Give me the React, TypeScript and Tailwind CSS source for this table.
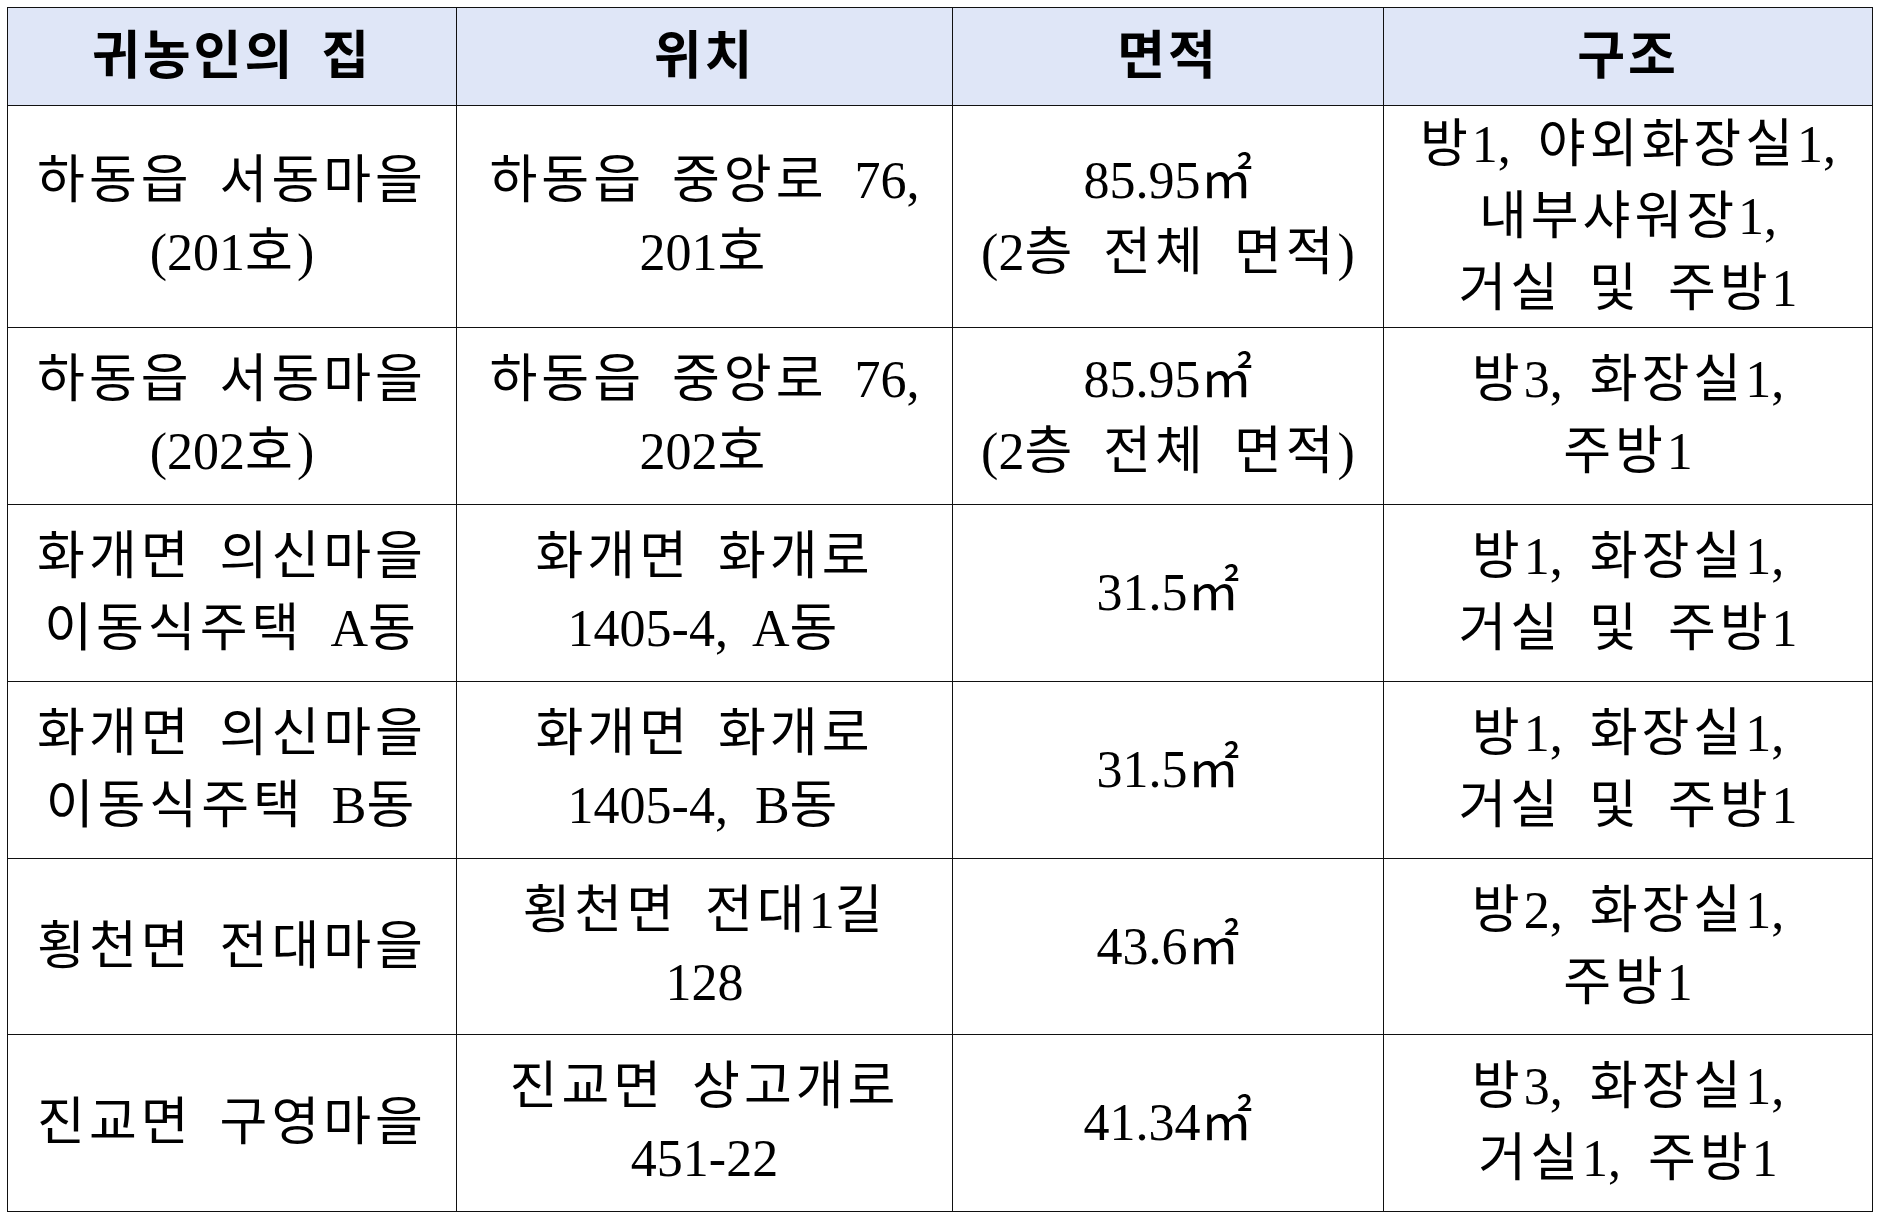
import { Fragment } from "react";

const FONT = '"Liberation Serif", "Noto Sans CJK KR", serif';

type Row = {
  h: number;
  cells: string[][];
};

const HEAD = ["귀농인의 집", "위치", "면적", "구조"];

const ROWS: Row[] = [
  {
    h: 222,
    cells: [
      ["하동읍 서동마을", "(201호)"],
      ["하동읍 중앙로 76,", "201호"],
      ["85.95㎡", "(2층 전체 면적)"],
      ["방1, 야외화장실1,", "내부샤워장1,", "거실 및 주방1"],
    ],
  },
  {
    h: 177,
    cells: [
      ["하동읍 서동마을", "(202호)"],
      ["하동읍 중앙로 76,", "202호"],
      ["85.95㎡", "(2층 전체 면적)"],
      ["방3, 화장실1,", "주방1"],
    ],
  },
  {
    h: 177,
    cells: [
      ["화개면 의신마을", "이동식주택 A동"],
      ["화개면 화개로", "1405-4, A동"],
      ["31.5㎡"],
      ["방1, 화장실1,", "거실 및 주방1"],
    ],
  },
  {
    h: 177,
    cells: [
      ["화개면 의신마을", "이동식주택 B동"],
      ["화개면 화개로", "1405-4, B동"],
      ["31.5㎡"],
      ["방1, 화장실1,", "거실 및 주방1"],
    ],
  },
  {
    h: 176,
    cells: [
      ["횡천면 전대마을"],
      ["횡천면 전대1길", "128"],
      ["43.6㎡"],
      ["방2, 화장실1,", "주방1"],
    ],
  },
  {
    h: 177,
    cells: [
      ["진교면 구영마을"],
      ["진교면 상고개로", "451-22"],
      ["41.34㎡"],
      ["방3, 화장실1,", "거실1, 주방1"],
    ],
  },
];

// 한글만 자간을 넓히고 숫자/영문은 붙여서 씀
function Line({ text }: { text: string }) {
  const parts = text.split(/([\uAC00-\uD7A3]+)/);
  return (
    <div>
      {parts.map((p, i) =>
        /[\uAC00-\uD7A3]/.test(p) ? (
          <span key={i} className="tracking-[4px]">
            {p}
          </span>
        ) : (
          <Fragment key={i}>{p}</Fragment>
        ),
      )}
    </div>
  );
}

export default function App() {
  return (
    <div
      className="w-[1877px] h-[1216px] bg-white pl-[7px] pt-[7px] text-black"
      style={{ fontFamily: FONT }}
    >
      <table className="border-collapse table-fixed w-[1865px]">
        <colgroup>
          <col className="w-[449px]" />
          <col className="w-[496px]" />
          <col className="w-[431px]" />
          <col className="w-[489px]" />
        </colgroup>
        <thead>
          <tr className="h-[98px] bg-[#dfe6f7]">
            {HEAD.map((t) => (
              <th
                key={t}
                className="border border-[#111] text-center align-middle text-[52px] font-bold tracking-[3px] [word-spacing:10px] whitespace-pre"
              >
                {t}
              </th>
            ))}
          </tr>
        </thead>
        <tbody>
          {ROWS.map((row, i) => (
            <tr key={i} style={{ height: row.h }}>
              {row.cells.map((lines, j) => (
                <td
                  key={j}
                  className="border border-[#111] text-center align-middle text-[52px] leading-[72px] [word-spacing:14px] whitespace-pre p-0"
                >
                  {lines.map((l, k) => (
                    <Line key={k} text={l} />
                  ))}
                </td>
              ))}
            </tr>
          ))}
        </tbody>
      </table>
    </div>
  );
}
